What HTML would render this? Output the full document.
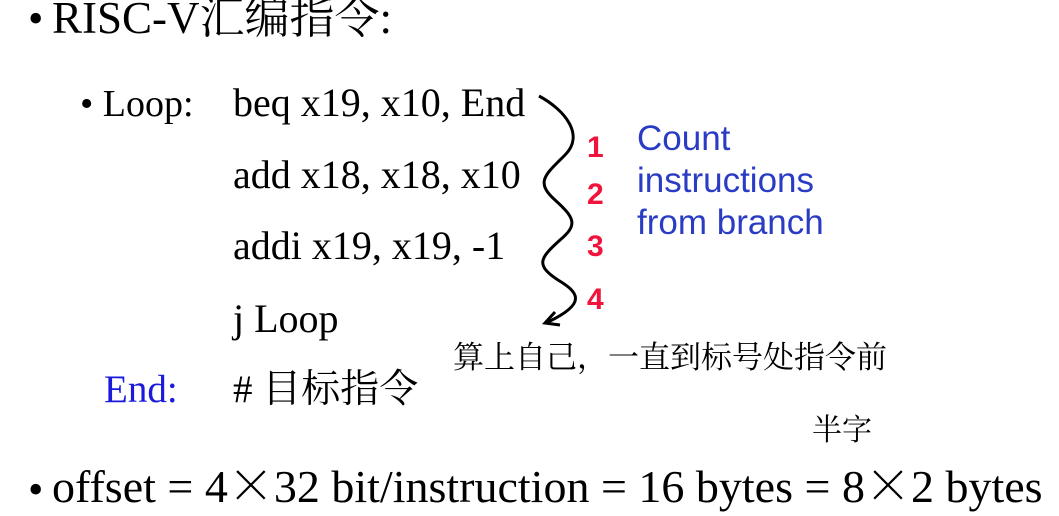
<!DOCTYPE html>
<html><head><meta charset="utf-8"><style>
body{margin:0;width:1059px;height:511px;background:#fff;position:relative;overflow:hidden;font-family:"Liberation Serif","Noto Serif CJK SC",serif;color:#000}
.t{position:absolute;white-space:nowrap;line-height:1}
.b{font-family:"Liberation Sans",sans-serif}
.x{font-family:"Noto Sans CJK SC",sans-serif;font-weight:300}
</style></head><body>
<div class="t" style="left:28px;top:-3px;font-size:44px">•</div>
<div class="t" style="left:52px;top:-4px;font-size:45px">RISC-V汇编指令:</div>
<div class="t" style="left:80px;top:85px;font-size:38px">•&nbsp;Loop:</div>
<div class="t" style="left:233px;top:83px;font-size:40px">beq x19, x10, End</div>
<div class="t" style="left:233px;top:155px;font-size:40px">add x18, x18, x10</div>
<div class="t" style="left:233px;top:226px;font-size:40px">addi x19, x19, -1</div>
<div class="t" style="left:233px;top:299px;font-size:40px">j Loop</div>
<div class="t" style="left:104px;top:370px;font-size:39px;color:#1a1adc">End:</div>
<div class="t" style="left:233px;top:370px;font-size:39px"># 目标指令</div>
<div class="t" style="left:453px;top:342px;font-size:31px">算上自己，一直到标号处指令前</div>
<div class="t" style="left:812px;top:416px;font-size:30px">半字</div>
<div class="t" style="left:28px;top:468px;font-size:44px">•</div>
<div class="t" style="left:52px;top:460px;font-size:46px">offset = 4<span class="x">×</span>32 bit/instruction = 16 bytes = 8<span class="x">×</span>2 bytes</div>
<div class="t b" style="left:637px;top:118px;font-size:35px;color:#2b3cc4;line-height:42px">Count<br>instructions<br>from branch</div>
<div class="t b" style="left:587px;top:133px;font-size:30px;color:#f0143c;font-weight:bold">1</div>
<div class="t b" style="left:587px;top:180px;font-size:30px;color:#f0143c;font-weight:bold">2</div>
<div class="t b" style="left:587px;top:232px;font-size:30px;color:#f0143c;font-weight:bold">3</div>
<div class="t b" style="left:587px;top:285px;font-size:30px;color:#f0143c;font-weight:bold">4</div>
<svg style="position:absolute;left:0;top:0" width="1059" height="511">
<path d="M539 96 C565 110 585 135 565 155 C545 175 535 182 555 200 C575 218 578 225 560 240 C540 258 535 265 558 280 C578 292 588 303 548 322" fill="none" stroke="#000" stroke-width="3"/>
<path d="M555 312 L545 323 L560 325" fill="none" stroke="#000" stroke-width="3"/>
</svg>
</body></html>
